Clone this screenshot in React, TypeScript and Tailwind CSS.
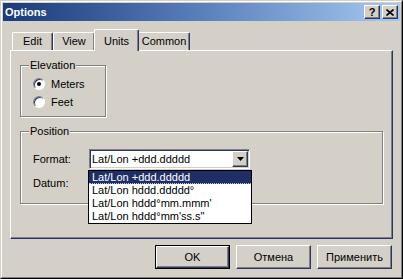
import React from "react";

const raised =
  "border border-t-white border-l-white border-r-[#2b3566] border-b-[#2b3566] shadow-[inset_-1px_-1px_0_#808080]";

function Radio({ checked, label }: { checked?: boolean; label: string }) {
  return (
    <div className="h-[12px] flex items-center gap-[6px]">
      <div className="w-[12px] h-[12px] rounded-full border border-t-[#808080] border-l-[#808080] border-r-white border-b-white bg-white shadow-[inset_1px_1px_0_#2b3566] flex items-center justify-center">
        {checked && <div className="w-[4px] h-[4px] rounded-full bg-black" />}
      </div>
      <span className="leading-[12px]">{label}</span>
    </div>
  );
}

function GroupBox({ title, className, children }: { title: string; className: string; children: React.ReactNode }) {
  return (
    <div className={`relative border border-[#808080] shadow-[1px_1px_0_#fff,inset_1px_1px_0_#fff] ${className}`}>
      <span className="absolute -top-[7px] left-[8px] px-[1px] bg-[#d4d0c8] leading-[13px]">{title}</span>
      {children}
    </div>
  );
}

function ArrowButton() {
  return (
    <div className={`w-[16px] h-[16px] bg-[#d4d0c8] flex items-center justify-center ${raised}`}>
      <svg width="7" height="4" viewBox="0 0 7 4">
        <path d="M0 0h7L3.5 4z" fill="#000" />
      </svg>
    </div>
  );
}

const formats = [
  "Lat/Lon +ddd.ddddd",
  "Lat/Lon hddd.ddddd°",
  "Lat/Lon hddd°mm.mmm'",
  "Lat/Lon hddd°mm'ss.s\"",
];

export default function App() {
  return (
    <div className="w-[403px] h-[279px] bg-[#d4d0c8] border border-t-[#d4d0c8] border-l-[#d4d0c8] border-r-black border-b-black text-[11px] text-black font-['Liberation_Sans',Arial,sans-serif]">
      <div className="h-full border border-t-white border-l-white border-r-[#808080] border-b-[#808080] p-[1px] flex flex-col">
        {/* Title bar */}
        <div className="h-[18px] shrink-0 flex items-center justify-between pl-[2px] pr-[2px] bg-gradient-to-r from-[#1a3a78] via-[#5a80bc] to-[#a6caf0]">
          <span className="text-white font-bold leading-[13px]">Options</span>
          <div className="flex gap-[2px]">
            <div className={`w-[16px] h-[14px] bg-[#d4d0c8] flex items-center justify-center font-bold text-[11px] leading-none ${raised}`}>?</div>
            <div className={`w-[16px] h-[14px] bg-[#d4d0c8] flex items-center justify-center ${raised}`}>
              <svg width="8" height="7" viewBox="0 0 8 7">
                <path d="M0.5 0.5L7.5 6.5M7.5 0.5L0.5 6.5" stroke="#000" strokeWidth="1.6" />
              </svg>
            </div>
          </div>
        </div>

        {/* Body */}
        <div className="flex-1 px-[7px] pt-[8px] flex flex-col">
          {/* Tabs */}
          <div className="h-[21px] flex items-end pl-[2px]">
            <div className="w-[41px] h-[18px] border border-b-0 border-t-white border-l-white border-r-[#2b3566] shadow-[inset_-1px_0_0_#808080] rounded-tl-[2px] rounded-tr-[2px] flex items-center justify-center">Edit</div>
            <div className="w-[42px] h-[18px] border border-b-0 border-t-white border-l-white border-r-[#2b3566] shadow-[inset_-1px_0_0_#808080] rounded-tl-[2px] rounded-tr-[2px] flex items-center justify-center">View</div>
            <div className="relative z-10 w-[45px] h-[22px] -mx-[1px] -mb-[1px] bg-[#d4d0c8] border border-b-0 border-t-white border-l-white border-r-[#2b3566] shadow-[inset_-1px_0_0_#808080] rounded-tl-[2px] rounded-tr-[2px] flex items-start justify-center pt-[3px]">Units</div>
            <div className="w-[52px] h-[18px] border border-b-0 border-t-white border-l-white border-r-[#2b3566] shadow-[inset_-1px_0_0_#808080] rounded-tl-[2px] rounded-tr-[2px] flex items-center justify-center">Common</div>
          </div>

          {/* Panel */}
          <div className="h-[189px] border border-t-white border-l-white border-r-[#2b3566] border-b-[#2b3566] shadow-[inset_-1px_-1px_0_#808080] pl-[9px] pr-[9px] pt-[14px] flex flex-col">
            <GroupBox title="Elevation" className="w-[86px] h-[52px] shrink-0">
              <div className="pt-[12px] pl-[12px] flex flex-col gap-[6px]">
                <Radio checked label="Meters" />
                <Radio label="Feet" />
              </div>
            </GroupBox>

            <GroupBox title="Position" className="mt-[14px] h-[73px] shrink-0">
              <div className="pt-[17px] pl-[12px] flex flex-col gap-[4px]">
                <div className="h-[20px] flex items-center">
                  <span className="w-[56px]">Format:</span>
                  <div className="relative">
                    <div className="w-[161px] h-[20px] bg-white border border-t-[#808080] border-l-[#808080] border-r-white border-b-white shadow-[inset_1px_1px_0_#2b3566,inset_-1px_-1px_0_#d4d0c8] flex items-center justify-between pl-[2px] pr-[1px]">
                      <span>Lat/Lon +ddd.ddddd</span>
                      <ArrowButton />
                    </div>
                    {/* Open dropdown list */}
                    <div className="absolute z-20 top-[21px] -left-[1px] w-[164px] bg-white border border-black">
                      {formats.map((f, i) => (
                        <div
                          key={f}
                          className={`h-[13px] pl-[3px] leading-[13px] whitespace-nowrap ${
                            i === 0 ? "bg-[#1f2f66] text-white border-b border-dotted border-[#c0c8e0]" : ""
                          }`}
                        >
                          {f}
                        </div>
                      ))}
                    </div>
                  </div>
                </div>
                <div className="h-[20px] flex items-center">
                  <span className="w-[56px]">Datum:</span>
                  <div className="w-[161px] h-[20px] bg-white border border-t-[#808080] border-l-[#808080] border-r-white border-b-white" />
                </div>
              </div>
            </GroupBox>
          </div>

          {/* Buttons */}
          <div className="mt-[6px] flex justify-end gap-[6px] pr-[1px]">
            <div className="w-[75px] h-[24px] border border-black">
              <div className={`h-full bg-[#d4d0c8] flex items-center justify-center ${raised}`}>OK</div>
            </div>
            <div className={`w-[75px] h-[24px] bg-[#d4d0c8] flex items-center justify-center ${raised}`}>Отмена</div>
            <div className={`w-[75px] h-[24px] bg-[#d4d0c8] flex items-center justify-center ${raised}`}>Применить</div>
          </div>
        </div>
      </div>
    </div>
  );
}
